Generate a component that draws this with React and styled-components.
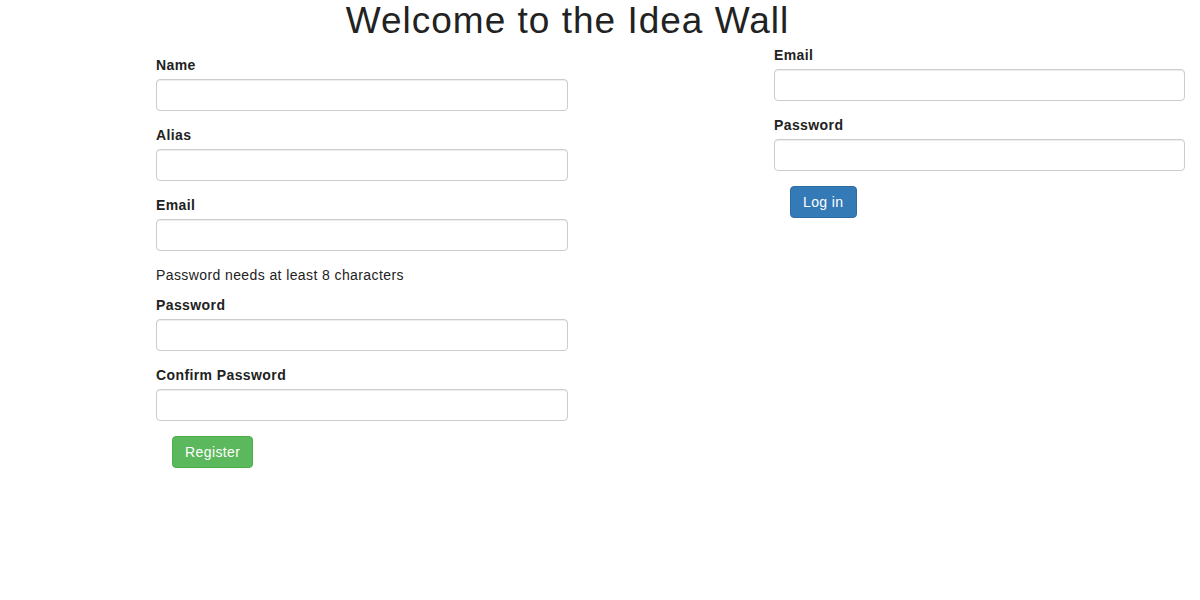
import React from "react";
import styled, { createGlobalStyle } from "styled-components";

const Global = createGlobalStyle`
  html, body { margin: 0; padding: 0; background: #fff; }
  body {
    font-family: "Liberation Sans", Arial, Helvetica, sans-serif;
    font-size: 14px;
    color: #333;
  }
  * { box-sizing: border-box; }
`;

const Page = styled.div`
  width: 1200px;
  height: 600px;
  overflow: hidden;
`;

const Title = styled.h1`
  margin: 0;
  width: 1135px;
  text-align: center;
  font-size: 37px;
  line-height: 42px;
  letter-spacing: 1px;
  font-weight: 400;
  color: #222;
`;

const Columns = styled.div`
  display: flex;
  align-items: flex-start;
  padding-left: 156px;
  gap: 206px;
`;

const Form = styled.form`
  width: ${(p) => p.$width}px;
  margin-top: ${(p) => p.$top}px;
  display: flex;
  flex-direction: column;
`;

const Group = styled.div`
  display: flex;
  flex-direction: column;
  margin-bottom: 13px;
`;

const Label = styled.label`
  font-weight: bold;
  font-size: 14px;
  line-height: 20px;
  letter-spacing: 0.4px;
  padding-top: 1px;
  margin-bottom: 4px;
  color: #222;
`;

const Input = styled.input`
  height: 32px;
  width: 100%;
  border: 1px solid #ccc;
  border-radius: 4px;
  box-shadow: inset 0 1px 1px rgba(0, 0, 0, 0.075);
  padding: 6px 12px;
  font-size: 14px;
  font-family: inherit;
  background: #fff;
`;

const Hint = styled.p`
  margin: 1px 0 9px;
  font-size: 14px;
  line-height: 20px;
  letter-spacing: 0.4px;
  color: #222;
`;

const Button = styled.button`
  align-self: flex-start;
  margin: 2px 0 0 16px;
  height: 32px;
  padding: 0 12px;
  font-family: inherit;
  font-size: 14px;
  line-height: 20px;
  letter-spacing: 0.4px;
  color: #fff;
  border-radius: 4px;
  border: 1px solid ${(p) => (p.$variant === "success" ? "#4cae4c" : "#2e6da4")};
  background: ${(p) => (p.$variant === "success" ? "#5cb85c" : "#337ab7")};
  cursor: pointer;
`;

const Field = ({ label, type = "text" }) => (
  <Group>
    <Label>{label}</Label>
    <Input type={type} />
  </Group>
);

export default function App() {
  return (
    <Page>
      <Global />
      <Title>Welcome to the Idea Wall</Title>
      <Columns>
        <Form $width={412} $top={12} onSubmit={(e) => e.preventDefault()}>
          <Field label="Name" />
          <Field label="Alias" />
          <Field label="Email" type="email" />
          <Hint>Password needs at least 8 characters</Hint>
          <Field label="Password" type="password" />
          <Field label="Confirm Password" type="password" />
          <Button $variant="success">Register</Button>
        </Form>
        <Form $width={411} $top={2} onSubmit={(e) => e.preventDefault()}>
          <Field label="Email" type="email" />
          <Field label="Password" type="password" />
          <Button $variant="primary">Log in</Button>
        </Form>
      </Columns>
    </Page>
  );
}
